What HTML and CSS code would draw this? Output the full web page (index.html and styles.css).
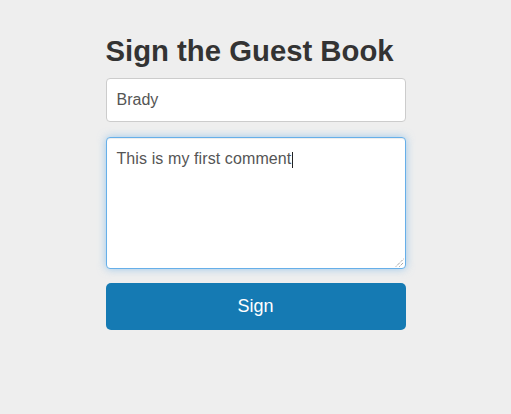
FILE: index.html
```html
<!DOCTYPE html>
<html>
<head>
<meta charset="utf-8">
<link rel="stylesheet" href="styles.css">
</head>
<body>
<main class="book">
  <h1 class="title">Sign the Guest Book</h1>
  <div class="field">Brady</div>
  <div class="area">This is my first comment<span class="caret"></span>
    <svg class="grip" width="9" height="9" viewBox="0 0 9 9"><path d="M1 8.5L8.5 1M4.5 8.5L8.5 4.5" stroke="#777" stroke-width="1" stroke-dasharray="1 1" fill="none"/></svg>
  </div>
  <div class="btn">Sign</div>
</main>
</body>
</html>
```
FILE: styles.css
```css
html, body {
  margin: 0;
  padding: 0;
  background: #eeeeee;
  font-family: "Liberation Sans", Arial, sans-serif;
}
.book {
  width: 300px;
  margin: 0 auto;
  padding-top: 34px;
  display: flex;
  flex-direction: column;
}
.title {
  margin: 0 0 11px;
  font-size: 29.3px;
  line-height: 33px;
  font-weight: bold;
  color: #333333;
}
.field {
  box-sizing: border-box;
  height: 44px;
  padding: 0 10px;
  border: 1px solid #cccccc;
  border-radius: 4px;
  background: #ffffff;
  color: #555555;
  font-size: 16px;
  display: flex;
  align-items: center;
}
.area {
  position: relative;
  box-sizing: border-box;
  margin-top: 15px;
  height: 132px;
  padding: 10px;
  border: 1px solid #66afe9;
  border-radius: 4px;
  background: #ffffff;
  color: #555555;
  font-size: 16px;
  line-height: 22px;
  letter-spacing: 0.1px;
  box-shadow: inset 0 1px 1px rgba(0,0,0,.075), 0 0 8px rgba(102,175,233,.6);
}
.caret {
  display: inline-block;
  width: 1px;
  height: 16px;
  margin-left: 1px;
  background: #222;
  vertical-align: -4px;
}
.grip {
  position: absolute;
  right: 1px;
  bottom: 1px;
}
.btn {
  box-sizing: border-box;
  margin-top: 14px;
  height: 47px;
  border-radius: 5px;
  background: #157ab3;
  color: #ffffff;
  font-size: 18px;
  display: flex;
  align-items: center;
  justify-content: center;
}
```
